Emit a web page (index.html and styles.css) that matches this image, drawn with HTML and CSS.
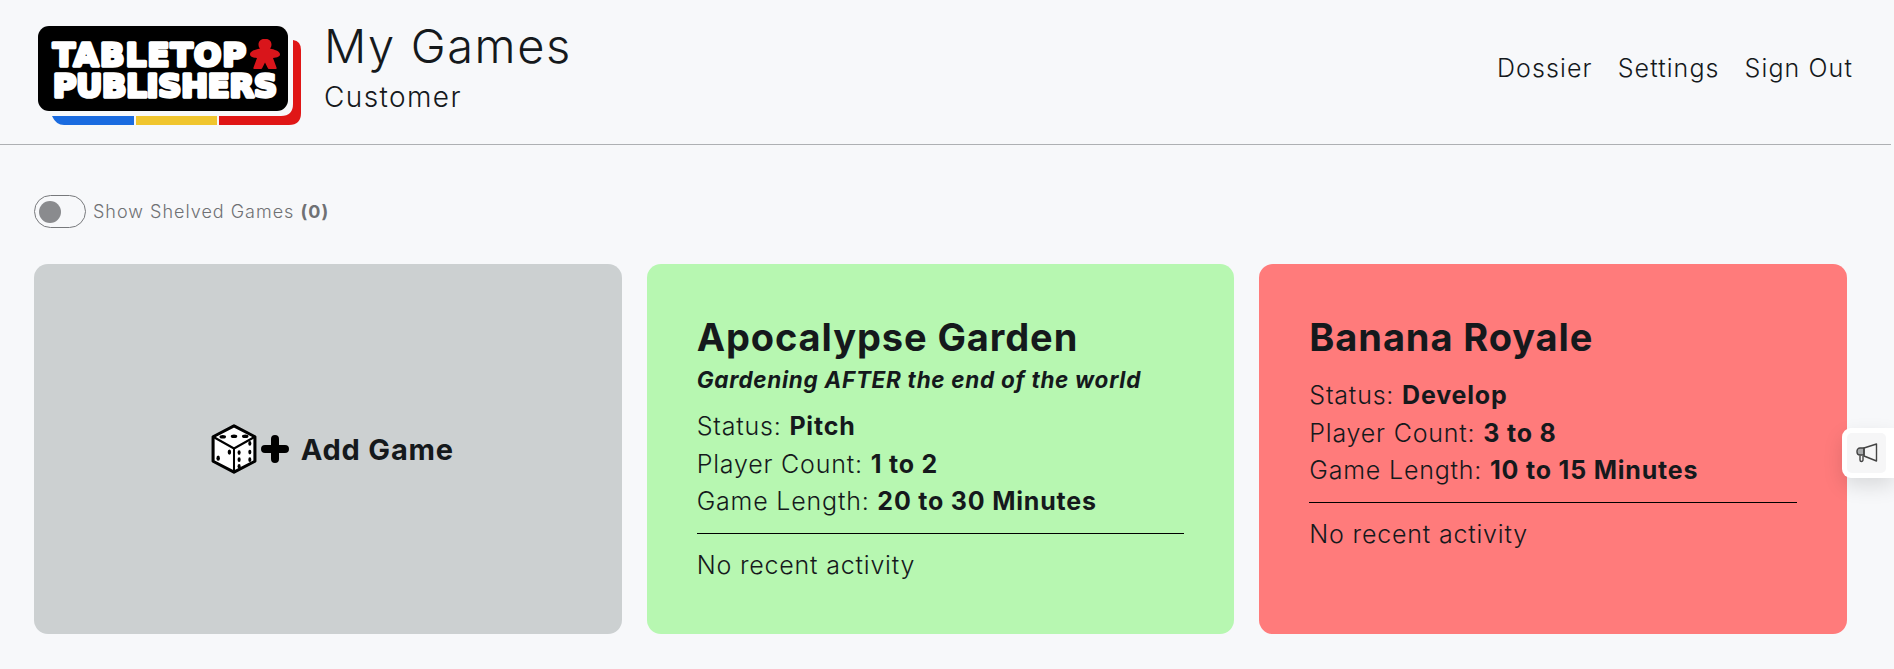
FILE: index.html
```html
<!DOCTYPE html>
<html lang="en">
<head>
  <meta charset="UTF-8">
  <title>My Games | Tabletop Publishers</title>
  <link rel="stylesheet" href="styles.css">
</head>
<body>
  <header class="topbar">
    <div class="brand">
      <svg class="logo" viewBox="0 0 264 100" width="264" height="100" role="img" aria-label="Tabletop Publishers">
        <path class="stripe-blue" d="M14 90h82v9H26q-8 0-12-9z"/>
        <rect class="stripe-yellow" x="98" y="90" width="81" height="9"/>
        <path class="stripe-red" d="M181 90H243q12 0 12-12V14q8 1 8 10V87q0 12-12 12H181z"/>
        <rect class="plate" x="0" y="0" width="250" height="85" rx="11"/>
        <text class="logo-text" x="15" y="40" textLength="193" lengthAdjust="spacing">TABLETOP</text>
        <text class="logo-text" x="15" y="71" textLength="224" lengthAdjust="spacing">PUBLISHERS</text>
        <path class="meeple" d="M226 13c-3.500 0-5.500 2.500-5.500 5.500 0 2 .7 3.200 1.500 4-4 1-10 2.500-10 6 0 2 2.500 3 7 3.500l-3.500 9.500c-.3 1 0 1.500 1 1.500h6c1 0 1.500-.5 2-1.500l2.500-5 2.500 5c.5 1 1 1.500 2 1.500h6c1 0 1.300-.5 1-1.500l-3.500-9.500c4.500-.5 7-1.500 7-3.500 0-3.500-6-5-10-6 .8-.8 1.500-2 1.500-4 0-3-2-5.500-5.500-5.500z"/>
      </svg>
      <div class="page-title">
        <h1>My Games</h1>
        <div class="role">Customer</div>
      </div>
    </div>
    <nav class="nav">
      <a href="#">Dossier</a>
      <a href="#">Settings</a>
      <a href="#">Sign Out</a>
    </nav>
  </header>

  <main class="content">
    <div class="shelved">
      <span class="toggle"><span class="knob"></span></span>
      <span>Show Shelved Games <b>(0)</b></span>
    </div>

    <div class="cards">
      <a class="card card-add" href="#">
        <svg class="dice" viewBox="0 0 45 49" width="46" height="50">
          <path class="dice-body" d="M22.5 1.800 43 12.500v24L22.500 47.200 2 36.500v-24z"/>
          <path class="dice-line" d="M2 12.500 22.500 24 43 12.500M22.500 24v23.200"/>
          <ellipse class="pip" cx="11.500" cy="12.500" rx="3.200" ry="1.800"/>
          <ellipse class="pip" cx="22.500" cy="12" rx="3.200" ry="1.800"/>
          <ellipse class="pip" cx="33.500" cy="12" rx="3.200" ry="1.800"/>
          <ellipse class="pip" cx="18" cy="27.500" rx="1.700" ry="2.600"/>
          <ellipse class="pip" cx="7" cy="33.500" rx="1.700" ry="2.600"/>
          <ellipse class="pip" cx="38" cy="19" rx="1.500" ry="2.300"/>
          <ellipse class="pip" cx="38" cy="27.500" rx="1.500" ry="2.300"/>
          <ellipse class="pip" cx="38" cy="35" rx="1.500" ry="2.300"/>
          <ellipse class="pip" cx="27.500" cy="28" rx="1.500" ry="2.300"/>
          <ellipse class="pip" cx="27.500" cy="35" rx="1.500" ry="2.300"/>
          <ellipse class="pip" cx="27.500" cy="41.500" rx="1.500" ry="2.300"/>
        </svg>
        <svg class="plus" viewBox="0 0 28 28" width="28" height="28">
          <path d="M14 4v20M4 14h20"/>
        </svg>
        <span class="add-label">Add Game</span>
      </a>

      <a class="card card-pitch" href="#">
        <h2>Apocalypse Garden</h2>
        <div class="tagline">Gardening AFTER the end of the world</div>
        <div class="row">Status: <b>Pitch</b></div>
        <div class="row">Player Count: <b>1 to 2</b></div>
        <div class="row">Game Length: <b>20 to 30 Minutes</b></div>
        <hr>
        <div class="row">No recent activity</div>
      </a>

      <a class="card card-develop" href="#">
        <h2>Banana Royale</h2>
        <div class="row">Status: <b>Develop</b></div>
        <div class="row">Player Count: <b>3 to 8</b></div>
        <div class="row">Game Length: <b>10 to 15 Minutes</b></div>
        <hr>
        <div class="row">No recent activity</div>
      </a>
    </div>
  </main>

  <div class="feedback">
    <span class="feedback-inner">
      <svg viewBox="0 0 22 20" width="22" height="20">
        <path class="horn-back" d="M8 5H4a3 3 0 0 0-3 3v1a3 3 0 0 0 3 3h4z"/>
        <path class="horn" d="M8 5 20.500 1v17L8 13z"/>
        <path class="horn" d="M4 12.500v4.500a1.500 1.500 0 0 0 3 0v-4"/>
      </svg>
    </span>
  </div>
</body>
</html>
```

FILE: styles.css
```css
* {
  box-sizing: border-box;
}

body {
  margin: 0;
  background-color: #f7f8fa;
  color: #15191c;
  font-family: Inter, 'Open Sans', sans-serif;
  overflow: hidden;
}

a {
  color: inherit;
  text-decoration: none;
}

.topbar {
  display: flex;
  justify-content: space-between;
  align-items: center;
  height: 145px;
  margin-right: 3px;
  padding: 0 38px 0 38px;
  border-bottom: 1px solid #aeb0b3;
}

.brand {
  display: flex;
  align-items: flex-start;
  gap: 22px;
}

.logo {
  margin-top: 8px;
}

.plate {
  fill: #000;
}

.stripe-blue {
  fill: #1a6be0;
}

.stripe-yellow {
  fill: #f0c52e;
}

.stripe-red {
  fill: #e01616;
}

.meeple {
  fill: #d9151b;
}

.logo-text {
  fill: #fff;
  stroke: #fff;
  stroke-width: 3.5;
  stroke-linejoin: round;
  font-family: 'DejaVu Sans', sans-serif;
  font-size: 32px;
  font-weight: 700;
}

.page-title h1 {
  margin: 0;
  font-size: 47px;
  font-weight: 300;
  line-height: 56px;
  letter-spacing: 1.6px;
}

.role {
  margin-top: 6px;
  font-size: 28px;
  font-weight: 300;
  line-height: 34px;
  letter-spacing: 1.4px;
}

.nav {
  display: flex;
  gap: 25px;
  margin-top: -8px;
  font-size: 25px;
  font-weight: 300;
  letter-spacing: 1.1px;
}

.content {
  padding: 50px 47px 0 34px;
}

.shelved {
  display: flex;
  align-items: center;
  gap: 7px;
  height: 33px;
  font-size: 18px;
  font-weight: 300;
  letter-spacing: 1px;
  color: #6f7174;
}

.shelved b {
  font-weight: 700;
}

.toggle {
  display: flex;
  align-items: center;
  width: 52px;
  height: 33px;
  padding-left: 4px;
  border: 1px solid #77797c;
  border-radius: 17px;
}

.knob {
  width: 22px;
  height: 22px;
  border-radius: 50%;
  background-color: #8a8b8e;
}

.cards {
  display: grid;
  grid-template-columns: repeat(3, 1fr);
  gap: 25px;
  margin-top: 36px;
}

.card {
  display: block;
  height: 370px;
  padding: 50px;
  border-radius: 14px;
}

.card h2 {
  margin: 0;
  font-size: 38px;
  font-weight: 700;
  line-height: 46px;
  letter-spacing: 0.9px;
}

.tagline {
  margin-top: 5px;
  margin-bottom: 13px;
  font-size: 22.5px;
  font-style: italic;
  font-weight: 700;
  line-height: 30px;
  letter-spacing: 0.7px;
}

.row {
  font-size: 25px;
  font-weight: 300;
  line-height: 37.5px;
  letter-spacing: 0.8px;
}

.row b {
  font-weight: 700;
}

.card h2 + .row {
  margin-top: 17px;
}

.card hr {
  margin: 12px 0 13px;
  border: 0;
  border-top: 1px solid #000;
}

.card-add {
  display: flex;
  justify-content: center;
  align-items: center;
  padding-left: 59px;
  background-color: #ccd0d1;
}

.card-pitch {
  background-color: #b7f7b1;
}

.card-develop {
  background-color: #ff7b7b;
}

.dice-body {
  fill: #fff;
}

.dice-body, .dice-line {
  stroke: #000;
  stroke-width: 3;
  stroke-linejoin: round;
}

.dice-line {
  fill: none;
  stroke-width: 2;
}

.pip {
  fill: #000;
}

.plus {
  margin-left: 4px;
}

.plus path {
  fill: none;
  stroke: #000;
  stroke-width: 8;
  stroke-linecap: round;
}

.add-label {
  margin-left: 12px;
  font-size: 29px;
  font-weight: 700;
  letter-spacing: 0.8px;
}

/* sticks to the window edge over the page */
.feedback {
  position: fixed;
  top: 428px;
  right: 0;
  width: 52px;
  height: 50px;
  padding: 5px 8px 5px 5px;
  border-radius: 9px 0 0 9px;
  background-color: #fff;
  box-shadow: 0 8px 20px rgba(0,0,0,0.12);
}

.feedback-inner {
  display: flex;
  justify-content: center;
  align-items: center;
  height: 100%;
  border-radius: 5px;
  background-color: #f6f6f7;
}

.horn {
  fill: none;
  stroke: #444;
  stroke-width: 1.4;
  stroke-linejoin: round;
}

.horn-back {
  fill: #a9abad;
  stroke: #444;
  stroke-width: 1.4;
}
```
